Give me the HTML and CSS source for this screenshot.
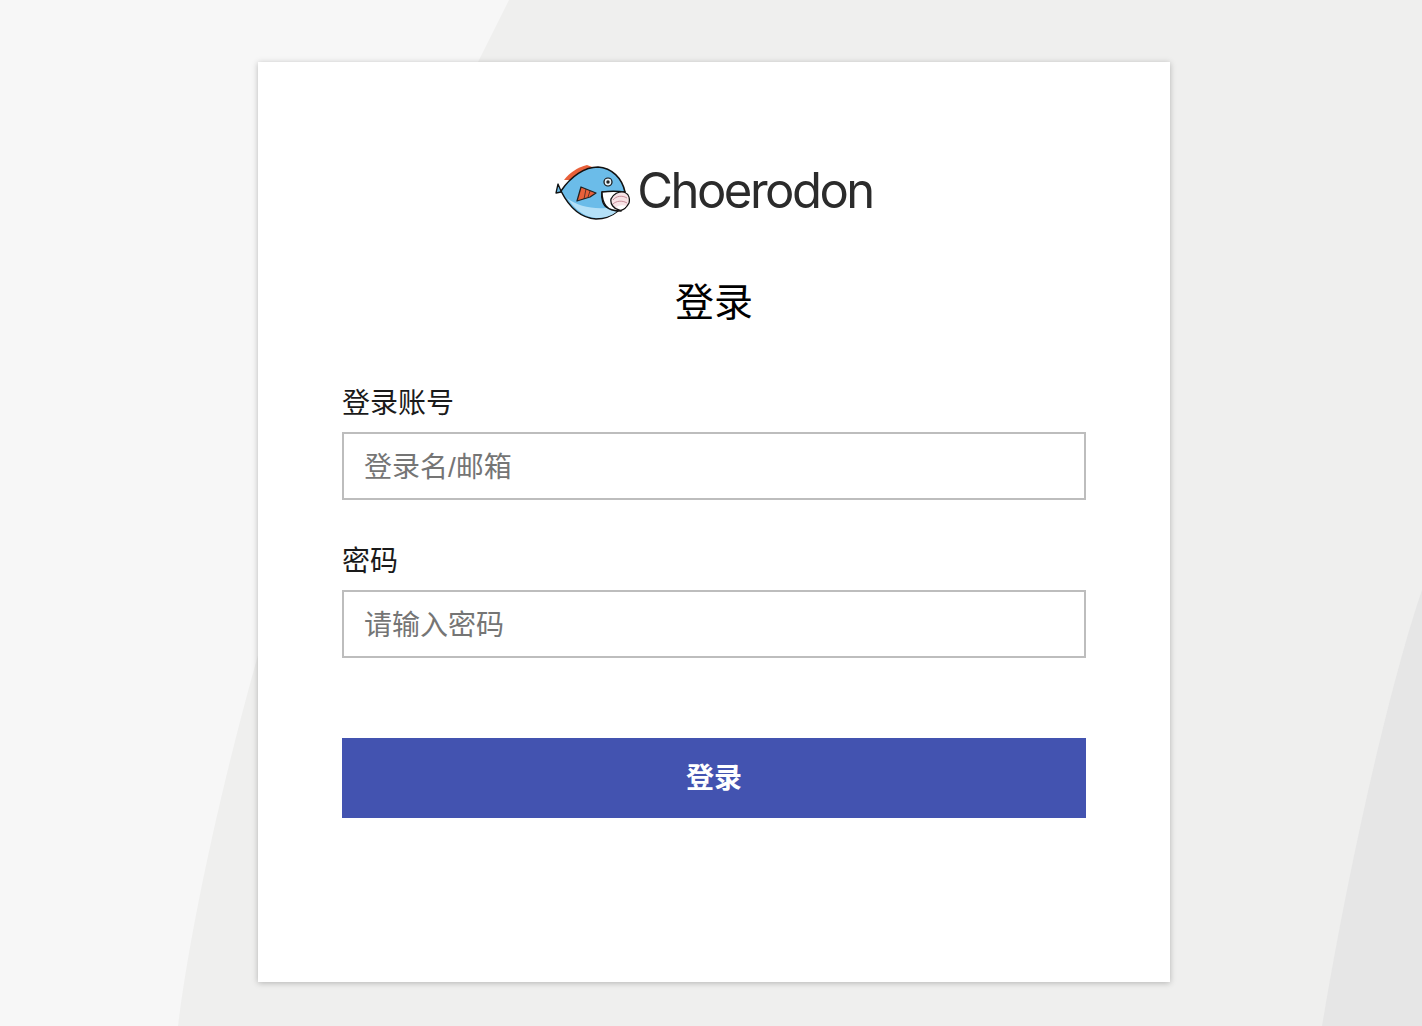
FILE: index.html
```html
<!DOCTYPE html>
<html lang="zh-CN">
<head>
<meta charset="utf-8">
<title>登录</title>
<link rel="stylesheet" href="styles.css">
</head>
<body>
<svg class="backdrop" viewBox="0 0 1422 1026" width="1422" height="1026" aria-hidden="true">
  <rect class="bg-a" width="1422" height="1026"/>
  <path class="bg-b" d="M509 0H1422V1026H178C190 930 220 790 258 655L258 62H478Z"/>
  <path class="bg-c" d="M1422 590C1388 690 1348 870 1322 1026H1422Z"/>
</svg>
<main class="page">
  <section class="card">
    <div class="logo">
      <svg class="fish" viewBox="0 0 75 56" width="75" height="56" aria-hidden="true">
        <path d="M9 15C14 8 23 2 32 0L45 5L20 15Z" fill="#e8603a"/>
        <path d="M6 26L3 19L1 28L6 27Z" fill="#6bbce9" stroke="#111" stroke-width="1.300" stroke-linejoin="round"/>
        <path d="M6 26C16 11 30 2 43 2C57 3 67 13 70 27L47 27C46 34 48 41 53 43C56 45 60 46 63 46C57 51 50 54 41 54C26 53 14 42 6 26Z" fill="#6bbce9" stroke="#111" stroke-width="1.500" stroke-linejoin="round"/>
        <path d="M12 33C22 41 36 44 51 43L62 46.500C56 51 50 53 41 53C29 52 20 44 12 33Z" fill="#b4e0f7"/>
        <path d="M26 22L41 28L35 32L22 36Z" fill="#e8603a" stroke="#222" stroke-width="1.300" stroke-linejoin="round"/>
        <path d="M31 24L29 34M35 26L33 32" stroke="#222" stroke-width=".7"/>
        <circle cx="53" cy="17" r="4" fill="#e6f2f8" stroke="#111" stroke-width="1.200"/>
        <circle cx="53" cy="17" r="1.700" fill="#222"/>
        <path d="M47 27C54 26 63 26 70 27L66 46C60 46 54 45 51 41C48 37 47 32 47 27Z" fill="#fff" stroke="#111" stroke-width="1.400" stroke-linejoin="round"/>
        <path d="M56 34C58 29 64 26 69 27C74 29 75 34 74 38C72 42 68 46 64 45C59 44 55 39 56 34Z" fill="#f8e3e6" stroke="#111" stroke-width="1.300"/>
        <path d="M58 35C61 31 67 30 72 33M58 39C61 36 67 35 72 38" fill="none" stroke="#c98d99" stroke-width="1"/>
        <path d="M61 42C65 40 69 40 71 41C69 44 66 45 64 44Z" fill="#fff"/>
      </svg>
      <span class="brand">Choerodon</span>
    </div>
    <h1 class="title">登录</h1>
    <form class="form">
      <label class="field">
        <span class="label">登录账号</span>
        <input class="input" type="text" placeholder="登录名/邮箱">
      </label>
      <label class="field">
        <span class="label">密码</span>
        <input class="input" type="password" placeholder="请输入密码">
      </label>
      <button class="submit" type="button">登录</button>
    </form>
  </section>
</main>
</body>
</html>
```
FILE: styles.css
```css
* { box-sizing: border-box; }
html, body { margin: 0; height: 100%; }
body {
  position: relative;
  overflow: hidden;
  font-family: "Liberation Sans", "Noto Sans CJK SC", sans-serif;
  background: #f7f7f7;
}
.backdrop { position: absolute; left: 0; top: 0; display: block; }
.bg-a { fill: #f7f7f7; }
.bg-b { fill: #efefee; }
.bg-c { fill: #e6e6e6; }
.page {
  position: relative;
  display: flex;
  padding: 62px 252px 0 258px;
}
.card {
  width: 912px;
  height: 920px;
  background: #fff;
  box-shadow: 0 1px 6px rgba(0, 0, 0, .25);
  padding: 103px 84px 0;
}
.logo {
  display: flex;
  align-items: center;
  justify-content: center;
  gap: 7px;
  height: 56px;
}
.fish { flex: none; }
.brand {
  font-family: Inter, sans-serif;
  font-weight: 400;
  font-size: 49px;
  letter-spacing: -2.5px;
  color: #2b2b2b;
  line-height: 52px;
  height: 56px;
}
.title {
  margin: 54px 0 0;
  height: 56px;
  font-size: 39px;
  line-height: 56px;
  font-weight: 400;
  color: #000;
  text-align: center;
}
.form { display: flex; flex-direction: column; margin-top: 56px; }
.field { display: flex; flex-direction: column; margin-bottom: 45px; }
.label {
  height: 34px;
  font-size: 28px;
  line-height: 34px;
  color: #1a1a1a;
  margin-bottom: 11px;
}
.input {
  width: 744px;
  height: 68px;
  border: 2px solid #bdbdbd;
  background: #fff;
  padding: 4px 21px 0 20px;
  font: inherit;
  font-size: 28px;
  outline: none;
}
.input::placeholder { color: #757575; opacity: 1; }
.submit {
  width: 744px;
  height: 80px;
  margin-top: 35px;
  padding: 0 0 4px;
  border: 0;
  background: #4353b0;
  color: #fff;
  font: inherit;
  font-size: 28px;
  font-weight: 700;
}
```
